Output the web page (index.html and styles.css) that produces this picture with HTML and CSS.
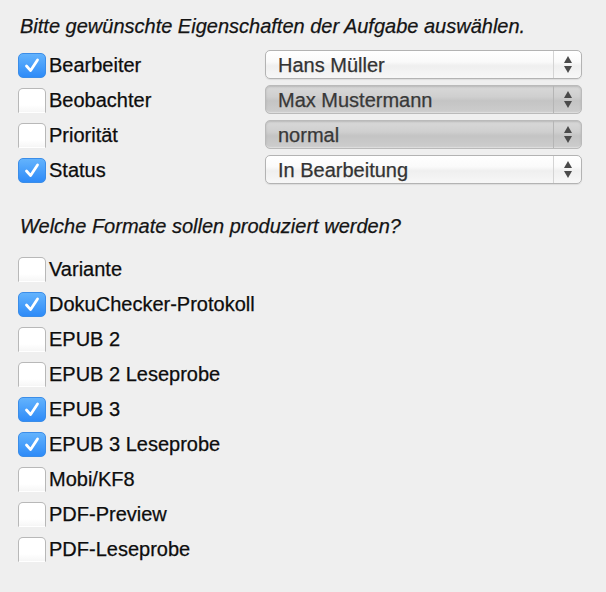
FILE: index.html
```html
<!DOCTYPE html>
<html lang="de">
<head>
<meta charset="utf-8">
<title>Aufgabe</title>
<link rel="stylesheet" href="styles.css">
</head>
<body>
<div class="page">
  <p class="heading first">Bitte gewünschte Eigenschaften der Aufgabe auswählen.</p>
  <div class="props">
    <div class="row">
      <label class="check"><span class="box checked"><svg viewBox="0 0 28 25"><path d="M8 13 L12.5 18 L20 6.5"/></svg></span>Bearbeiter</label>
      <div class="select"><span class="value">Hans Müller</span><span class="arrows"><i class="up"></i><i class="down"></i></span></div>
    </div>
    <div class="row">
      <label class="check"><span class="box"></span>Beobachter</label>
      <div class="select disabled"><span class="value">Max Mustermann</span><span class="arrows"><i class="up"></i><i class="down"></i></span></div>
    </div>
    <div class="row">
      <label class="check"><span class="box"></span>Priorität</label>
      <div class="select disabled"><span class="value">normal</span><span class="arrows"><i class="up"></i><i class="down"></i></span></div>
    </div>
    <div class="row">
      <label class="check"><span class="box checked"><svg viewBox="0 0 28 25"><path d="M8 13 L12.5 18 L20 6.5"/></svg></span>Status</label>
      <div class="select"><span class="value">In Bearbeitung</span><span class="arrows"><i class="up"></i><i class="down"></i></span></div>
    </div>
  </div>
  <p class="heading second">Welche Formate sollen produziert werden?</p>
  <div class="formats">
    <label class="check"><span class="box"></span>Variante</label>
    <label class="check"><span class="box checked"><svg viewBox="0 0 28 25"><path d="M8 13 L12.5 18 L20 6.5"/></svg></span>DokuChecker-Protokoll</label>
    <label class="check"><span class="box"></span>EPUB 2</label>
    <label class="check"><span class="box"></span>EPUB 2 Leseprobe</label>
    <label class="check"><span class="box checked"><svg viewBox="0 0 28 25"><path d="M8 13 L12.5 18 L20 6.5"/></svg></span>EPUB 3</label>
    <label class="check"><span class="box checked"><svg viewBox="0 0 28 25"><path d="M8 13 L12.5 18 L20 6.5"/></svg></span>EPUB 3 Leseprobe</label>
    <label class="check"><span class="box"></span>Mobi/KF8</label>
    <label class="check"><span class="box"></span>PDF-Preview</label>
    <label class="check"><span class="box"></span>PDF-Leseprobe</label>
  </div>
</div>
</body>
</html>
```
FILE: styles.css
```css
html, body {
  margin: 0;
  padding: 0;
  background: #efefef;
}
body {
  font-family: "Liberation Sans", Arial, sans-serif;
  font-size: 20px;
  color: #0d0d0d;
  -webkit-text-stroke: 0.25px currentColor;
}
.page {
  padding: 14px 0 0 18px;
}
.heading {
  margin: 0 0 0 2px;
  font-style: italic;
  line-height: 24px;
  color: #141414;
}
.heading.first { margin-bottom: 12px; }
.heading.second { margin-top: 30px; margin-bottom: 16px; }
.props {
  display: flex;
  flex-direction: column;
  gap: 6px;
}
.row {
  display: grid;
  grid-template-columns: 247px 317px;
  height: 29px;
}
.check {
  display: flex;
  align-items: flex-start;
  gap: 3px;
  line-height: 30px;
  height: 29px;
}
.formats {
  display: flex;
  flex-direction: column;
  gap: 6px;
}
.box {
  flex: none;
  box-sizing: border-box;
  width: 28px;
  height: 25px;
  margin-top: 3px;
  border: 1px solid #b8b8b8;
  border-bottom-color: transparent;
  border-radius: 5px 5px 0 0;
  background: linear-gradient(#ffffff, #ffffff 70%, #f6f6f6);
}
.box.checked {
  border: 1px solid #3b8de8;
  border-radius: 5px;
  background: linear-gradient(#63b3fd, #2e8bf8);
  display: flex;
  align-items: center;
  justify-content: center;
}
.box svg {
  width: 26px;
  height: 23px;
}
.box path {
  fill: none;
  stroke: #fff;
  stroke-width: 3;
  stroke-linecap: round;
  stroke-linejoin: round;
  -webkit-text-stroke: 0;
}
.select {
  box-sizing: border-box;
  height: 29px;
  border: 1px solid #b3b3b3;
  border-radius: 5px;
  background: linear-gradient(#ffffff 0%, #fafafa 40%, #efefef 55%, #f7f7f7 100%);
  box-shadow: 0 1px 1px rgba(0,0,0,0.08);
  display: flex;
  align-items: center;
  color: #333;
}
.select.disabled {
  border-color: #bababa;
  background: linear-gradient(#d9d9d9 0%, #cfcfcf 40%, #c4c4c4 55%, #cdcdcd 100%);
  box-shadow: inset 0 1px 2px rgba(0,0,0,0.15), inset 0 -1px 1px rgba(255,255,255,0.4);
  color: #383838;
}
.value {
  flex: 1;
  padding-left: 12px;
  line-height: 28px;
}
.arrows {
  box-sizing: border-box;
  width: 28px;
  height: 100%;
  border-left: 1px solid #d4d4d4;
  display: flex;
  flex-direction: column;
  align-items: center;
  justify-content: center;
  gap: 3px;
}
.select.disabled .arrows {
  border-left-color: #b5b5b5;
}
.arrows i {
  display: block;
  width: 0;
  height: 0;
  border-left: 4.5px solid transparent;
  border-right: 4.5px solid transparent;
}
.arrows .up { border-bottom: 7px solid #4a4a4a; }
.arrows .down { border-top: 7px solid #4a4a4a; }
```
